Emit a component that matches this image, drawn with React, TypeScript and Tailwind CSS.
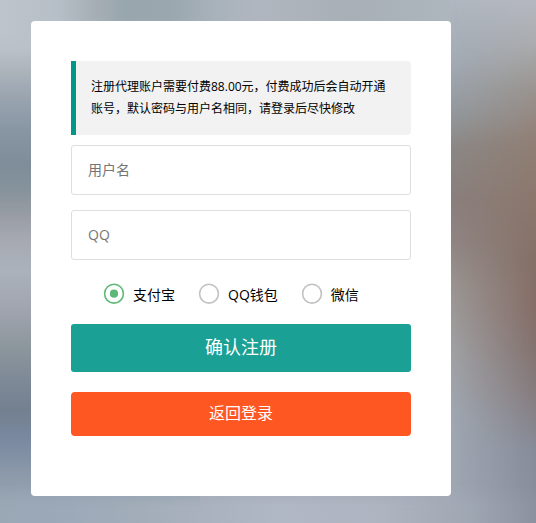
import React, { useState } from 'react';

const PAY_TYPES = [
  { id: 'alipay', name: '支付宝' },
  { id: 'qqpay', name: 'QQ钱包' },
  { id: 'wxpay', name: '微信' },
];

const Radio: React.FC<{ checked: boolean }> = ({ checked }) => (
  <svg width="22" height="22" viewBox="0 0 22 22" fill="none" className="shrink-0">
    <circle cx="11" cy="10.7" r="9.4" stroke={checked ? '#5fb878' : '#c2c2c2'} strokeWidth="1.6" />
    {checked && <circle cx="11" cy="10.7" r="4.1" fill="#5fb878" />}
  </svg>
);

// Soft out-of-focus backdrop
const Backdrop: React.FC = () => (
  <div className="absolute inset-0 overflow-hidden bg-[#a3abb6]">
    <div className="absolute inset-y-0 left-0 w-[200px] bg-[linear-gradient(180deg,#bfc5cd_0px,#b9c0c8_50px,#a9b1b9_75px,#98a3ae_100px,#8896a4_130px,#7e8d99_165px,#86939c_190px,#989ca4_215px,#a6a9b2_240px,#abb2bc_270px,#a0a4ae_310px,#8b959c_350px,#808b98_375px,#738090_410px,#7a89a0_440px,#8e9cac_480px,#9ca8b5_523px)]" />
    <div className="absolute inset-x-0 top-0 h-[60px] bg-[linear-gradient(90deg,#bfc4cc_0px,#b5bec6_60px,#a6aeb5_95px,#98a6ae_125px,#9aa7af_170px,#a8b2bb_215px,#b0b6bf_255px,#a8b0b6_350px,#adb5bd_440px,#b3b6bf_536px)] [mask-image:linear-gradient(180deg,#000_30%,transparent)]" />
    <div className="absolute inset-y-0 right-0 w-[86px] bg-[linear-gradient(180deg,#b0b7c0_0px,#a3abb5_60px,#949a9f_110px,#8b8785_150px,#8a7f7d_200px,#8f8583_240px,#9b9694_290px,#a0a1a4_350px,#a0a8b3_420px,#a0a8b4_523px)]" />
    <div className="absolute inset-y-0 right-0 w-[86px] bg-[linear-gradient(180deg,#b5b8c0_0px,#a9abad_45px,#99938f_90px,#907f75_140px,#8b776c_200px,#846f66_260px,#856d67_310px,#83726f_350px,#857d80_400px,#868b98_450px,#8a8f9e_523px)] [mask-image:linear-gradient(90deg,transparent,#000)]" />
    <div className="absolute inset-x-0 bottom-0 h-[40px] bg-[linear-gradient(90deg,#9aa7b5_0px,#9ba9b8_60px,#a4adba_150px,#b1b8c5_280px,#aeb5c1_380px,#9fa7b3_470px,#8c919f_536px)] [mask-image:linear-gradient(180deg,transparent,#000_60%)]" />
  </div>
);

export default function App() {
  const [payType, setPayType] = useState('alipay');

  return (
    <div className="relative h-[523px] w-[536px] overflow-hidden pl-[31px] pt-[21px] font-['Open_Sans','Noto_Sans_CJK_SC',sans-serif]">
      <Backdrop />
      <form className="relative h-[475px] w-[420px] rounded bg-white p-10" onSubmit={(e) => e.preventDefault()}>
        <div className="h-[74px] rounded-r-sm border-l-5 border-[#009688] bg-[#f2f2f2] p-[15px] text-xs leading-[22px] text-black">
          <p className="whitespace-nowrap">注册代理账户需要付费88.00元，付费成功后会自动开通</p>
          <p className="whitespace-nowrap">账号，默认密码与用户名相同，请登录后尽快修改</p>
        </div>

        <input
          type="text"
          placeholder="用户名"
          className="mt-2.5 block h-[50px] w-full rounded-[3px] border border-[#dcdedf] bg-white px-4 pb-0.5 text-sm text-black outline-none placeholder:text-[#757575]"
        />
        <input
          type="text"
          placeholder="QQ"
          className="mt-[15px] block h-[50px] w-full rounded-[3px] border border-[#dcdedf] bg-white px-4 pb-0.5 text-sm text-black outline-none placeholder:text-[#757575]"
        />

        <div className="flex h-16 items-center gap-[23px] pb-px pl-8 pt-1">
          {PAY_TYPES.map((pay) => (
            <button
              key={pay.id}
              type="button"
              onClick={() => setPayType(pay.id)}
              className="flex items-center gap-2 text-sm text-black"
            >
              <Radio checked={payType === pay.id} />
              <span className="pt-0.5 leading-5">{pay.name}</span>
            </button>
          ))}
        </div>

        <button type="submit" className="block h-12 w-full rounded-[3px] bg-[#1aa094] pb-0.5 text-lg text-white">
          确认注册
        </button>
        <button type="button" className="mt-5 block h-11 w-full rounded-sm bg-[#ff5722] pb-0.5 text-base text-white">
          返回登录
        </button>
      </form>
    </div>
  );
}
